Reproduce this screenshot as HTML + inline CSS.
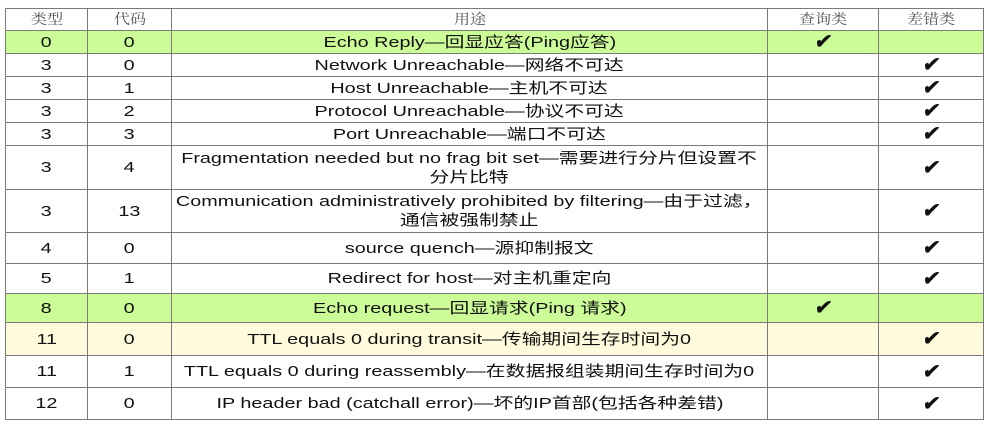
<!DOCTYPE html>
<html><head><meta charset="utf-8"><style>
body{margin:0;width:992px;height:426px;background:#fff;overflow:hidden}
table{position:absolute;left:5px;top:8px;border-collapse:collapse;table-layout:fixed;font-family:"Liberation Sans","Noto Sans CJK SC",sans-serif;font-size:15px;color:#111}
td{border:1.5px solid #7a7a7a;text-align:center;padding:0;line-height:19px;overflow:visible;white-space:nowrap}
td span{display:inline-block;transform:scaleX(1.32)}
tr.h td{font-family:"Noto Serif CJK SC",serif;color:#555;font-size:14px}
tr.h td span{transform:scaleX(1.15)}
tr.g td{background:#ccfc98}
tr.y td{background:#fffbdc}
.c{font-size:20px;font-weight:bold;line-height:18px}
.c span{transform:skewX(-10deg)}
</style></head><body>
<table>
<colgroup><col style="width:82px"><col style="width:84px"><col style="width:596px"><col style="width:111px"><col style="width:105px"></colgroup>
<tr class="h" style="height:22px"><td><span>类型</span></td><td><span>代码</span></td><td><span>用途</span></td><td><span>查询类</span></td><td><span>差错类</span></td></tr>
<tr class="g" style="height:23px"><td><span>0</span></td><td><span>0</span></td><td><span>Echo Reply—回显应答(Ping应答)</span></td><td class="c"><span>✔</span></td><td></td></tr>
<tr style="height:23px"><td><span>3</span></td><td><span>0</span></td><td><span>Network Unreachable—网络不可达</span></td><td></td><td class="c"><span>✔</span></td></tr>
<tr style="height:23px"><td><span>3</span></td><td><span>1</span></td><td><span>Host Unreachable—主机不可达</span></td><td></td><td class="c"><span>✔</span></td></tr>
<tr style="height:23px"><td><span>3</span></td><td><span>2</span></td><td><span>Protocol Unreachable—协议不可达</span></td><td></td><td class="c"><span>✔</span></td></tr>
<tr style="height:23px"><td><span>3</span></td><td><span>3</span></td><td><span>Port Unreachable—端口不可达</span></td><td></td><td class="c"><span>✔</span></td></tr>
<tr style="height:44px"><td><span>3</span></td><td><span>4</span></td><td><span>Fragmentation needed but no frag bit set—需要进行分片但设置不<br>分片比特</span></td><td></td><td class="c"><span>✔</span></td></tr>
<tr style="height:43px"><td><span>3</span></td><td><span>13</span></td><td><span>Communication administratively prohibited by filtering—由于过滤，<br>通信被强制禁止</span></td><td></td><td class="c"><span>✔</span></td></tr>
<tr style="height:31px"><td><span>4</span></td><td><span>0</span></td><td><span>source quench—源抑制报文</span></td><td></td><td class="c"><span>✔</span></td></tr>
<tr style="height:30px"><td><span>5</span></td><td><span>1</span></td><td><span>Redirect for host—对主机重定向</span></td><td></td><td class="c"><span>✔</span></td></tr>
<tr class="g" style="height:29px"><td><span>8</span></td><td><span>0</span></td><td><span>Echo request—回显请求(Ping 请求)</span></td><td class="c"><span>✔</span></td><td></td></tr>
<tr class="y" style="height:33px"><td><span>11</span></td><td><span>0</span></td><td><span>TTL equals 0 during transit—传输期间生存时间为0</span></td><td></td><td class="c"><span>✔</span></td></tr>
<tr style="height:32px"><td><span>11</span></td><td><span>1</span></td><td><span>TTL equals 0 during reassembly—在数据报组装期间生存时间为0</span></td><td></td><td class="c"><span>✔</span></td></tr>
<tr style="height:32px"><td><span>12</span></td><td><span>0</span></td><td><span>IP header bad (catchall error)—坏的IP首部(包括各种差错)</span></td><td></td><td class="c"><span>✔</span></td></tr>
</table>
</body></html>
